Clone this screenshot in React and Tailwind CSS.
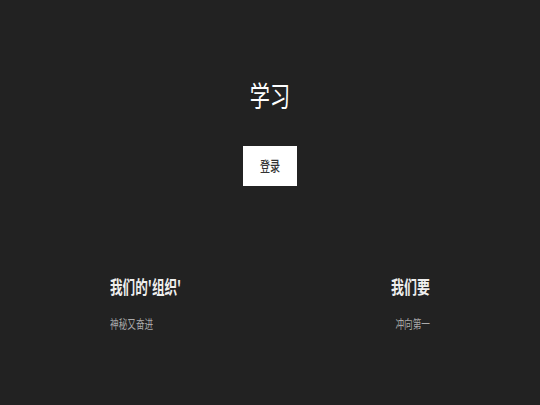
export default function App() {
  const font = { fontFamily: '"Noto Sans CJK SC", "Noto Sans", sans-serif' };
  return (
    <div className="w-[540px] h-[405px] bg-[#222222] overflow-hidden flex flex-col items-center" style={font}>
      <h1 className="mt-[78px] text-[28px] leading-[34px] text-white font-normal scale-x-[0.72]">学习</h1>
      <button className="mt-[34px] w-[54px] h-[40px] bg-white flex items-center justify-center pb-[3px]">
        <span className="text-[14px] leading-[20px] text-[#333333] font-medium scale-x-[0.72] inline-block">登录</span>
      </button>
      <div className="mt-[87px] w-full flex justify-between px-[110px]">
        <div className="flex flex-col items-start">
          <div className="text-[18px] leading-[27px] font-semibold text-[#eeeeee] scale-x-[0.7] origin-left whitespace-nowrap">我们的'组织'</div>
          <div className="mt-[15px] text-[12px] leading-[18px] text-[#aaaaaa] scale-x-[0.72] origin-left whitespace-nowrap">神秘又奋进</div>
        </div>
        <div className="flex flex-col items-end">
          <div className="text-[18px] leading-[27px] font-semibold text-[#eeeeee] scale-x-[0.72] origin-right whitespace-nowrap">我们要</div>
          <div className="mt-[15px] text-[12px] leading-[18px] text-[#aaaaaa] scale-x-[0.72] origin-right whitespace-nowrap">冲向第一</div>
        </div>
      </div>
    </div>
  );
}
